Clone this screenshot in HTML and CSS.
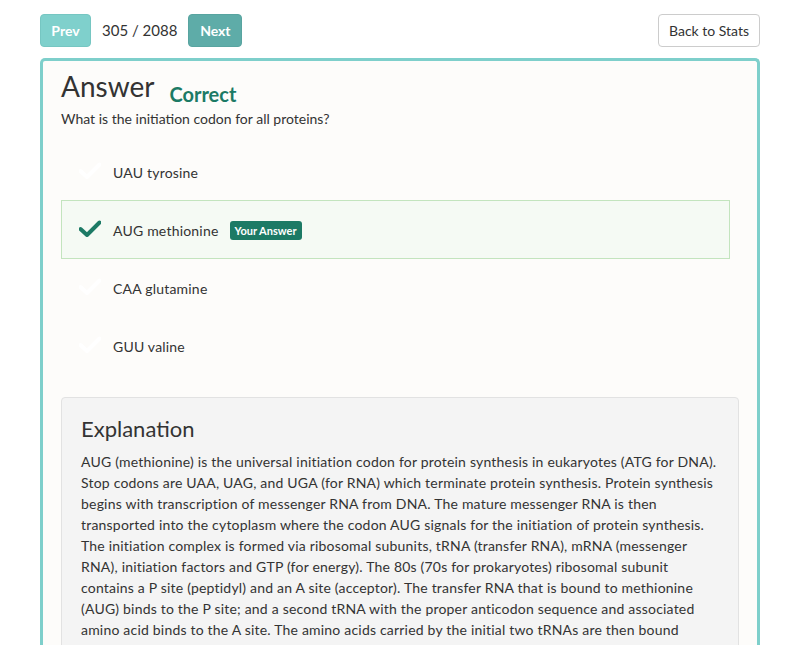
FILE: index.html
```html
<!DOCTYPE html>
<html>
<head>
<meta charset="utf-8">
<link rel="stylesheet" href="styles.css">
</head>
<body>
<div class="container">
  <div class="toolbar">
    <div class="nav">
      <button class="btn btn-prev">Prev</button>
      <span class="counter">305 / 2088</span>
      <button class="btn btn-next">Next</button>
    </div>
    <button class="btn btn-back">Back to Stats</button>
  </div>
  <div class="card">
    <div class="title-row">
      <h1 class="title">Answer</h1>
      <span class="status">Correct</span>
    </div>
    <p class="question">What is the initiation codon for all proteins?</p>
    <ul class="options">
      <li class="option">
        <svg class="check" viewBox="0 0 22 17"><path d="M1.5 9 L8 15 L20.5 2.5" /></svg>
        <span>UAU tyrosine</span>
      </li>
      <li class="option selected">
        <svg class="check" viewBox="0 0 22 17"><path d="M1.5 9 L8 15 L20.5 2.5" /></svg>
        <span>AUG methionine</span>
        <span class="badge">Your Answer</span>
      </li>
      <li class="option">
        <svg class="check" viewBox="0 0 22 17"><path d="M1.5 9 L8 15 L20.5 2.5" /></svg>
        <span>CAA glutamine</span>
      </li>
      <li class="option">
        <svg class="check" viewBox="0 0 22 17"><path d="M1.5 9 L8 15 L20.5 2.5" /></svg>
        <span>GUU valine</span>
      </li>
    </ul>
    <div class="explanation">
      <h2 class="exp-title">Explanation</h2>
      <p class="exp-text">AUG (methionine) is the universal initiation codon for protein synthesis in eukaryotes (ATG for DNA).<br>
Stop codons are UAA, UAG, and UGA (for RNA) which terminate protein synthesis. Protein synthesis<br>
begins with transcription of messenger RNA from DNA. The mature messenger RNA is then<br>
transported into the cytoplasm where the codon AUG signals for the initiation of protein synthesis.<br>
The initiation complex is formed via ribosomal subunits, tRNA (transfer RNA), mRNA (messenger<br>
RNA), initiation factors and GTP (for energy). The 80s (70s for prokaryotes) ribosomal subunit<br>
contains a P site (peptidyl) and an A site (acceptor). The transfer RNA that is bound to methionine<br>
(AUG) binds to the P site; and a second tRNA with the proper anticodon sequence and associated<br>
amino acid binds to the A site. The amino acids carried by the initial two tRNAs are then bound<br>
together via peptidyl transferase and the energy from GTP. The ribosome then moves along the</p>
    </div>
  </div>
</div>
</body>
</html>
```

FILE: styles.css
```css
* { box-sizing: border-box; }
html, body { margin: 0; padding: 0; background: #ffffff; }
body {
  font-family: Lato, "Open Sans", sans-serif;
  color: #333;
  overflow: hidden;
  height: 645px;
}
.container {
  width: 720px;
  margin: 0 auto;
  padding-top: 14px;
}
.toolbar {
  display: flex;
  justify-content: space-between;
  align-items: center;
}
.nav {
  display: flex;
  align-items: center;
  gap: 11px;
}
.btn {
  font-family: Lato, sans-serif;
  height: 33px;
  border-radius: 4px;
  font-size: 14px;
  padding: 0 12px;
  border: 1px solid transparent;
  cursor: pointer;
}
.btn-prev {
  background: #7fd0cc;
  border-color: #76c6c2;
  color: #fff;
  font-weight: 700;
  width: 51px;
  padding: 0;
}
.btn-next {
  background: #5eaca8;
  border-color: #58a4a0;
  color: #fff;
  font-weight: 700;
  width: 54px;
  padding: 0;
}
.counter {
  font-size: 15px;
  color: #333;
  margin-top: -2px;
}
.btn-back {
  background: #fff;
  border-color: #ccc;
  color: #333;
  width: 102px;
  padding: 0;
}
.card {
  margin-top: 11px;
  border: 3px solid #7ecfcb;
  border-bottom: none;
  border-radius: 5px 5px 0 0;
  background: #fdfcfa;
  padding: 8px 18px 0 18px;
  height: 600px;
}
.title-row {
  display: flex;
  align-items: baseline;
}
.title {
  margin: 0;
  font-size: 28px;
  font-weight: 400;
  line-height: 34px;
  color: #333;
}
.status {
  margin-left: 15px;
  font-size: 20px;
  font-weight: 700;
  color: #1c7a65;
  position: relative;
  top: 5px;
}
.question {
  margin: 6px 0 0 0;
  font-size: 14px;
  line-height: 20px;
}
.options {
  list-style: none;
  margin: 13px 0 0 0;
  padding: 0;
  width: 669px;
}
.option {
  display: flex;
  align-items: center;
  height: 59px;
  padding-left: 17px;
  padding-top: 2px;
  font-size: 14px;
  letter-spacing: 0.2px;
  border: 1px solid transparent;
  margin-bottom: -1px;
}
.option.selected {
  background: #f5faf4;
  border-color: #c3e4be;
}
.check {
  width: 22px;
  height: 17px;
  margin-right: 12px;
  margin-top: -4px;
  fill: none;
  stroke: #ffffff;
  stroke-width: 4;
  stroke-linecap: round;
  stroke-linejoin: round;
}
.selected .check { stroke: #1c7a65; }
.badge {
  display: inline-block;
  margin-left: 11px;
  background: #1c7a65;
  color: #fff;
  font-size: 11px;
  font-weight: 700;
  letter-spacing: 0;
  height: 19px;
  line-height: 19px;
  padding: 0 5px;
  border-radius: 3px;
}
.explanation {
  margin-top: 23px;
  width: 678px;
  background: #f4f4f4;
  border: 1px solid #e2e2e2;
  border-radius: 4px;
  padding: 17px 19px;
}
.exp-title {
  margin: 0 0 8px 0;
  font-size: 22px;
  font-weight: 400;
  line-height: 28px;
}
.exp-text {
  margin: 0;
  font-size: 14px;
  line-height: 21px;
  letter-spacing: 0.2px;
  white-space: nowrap;
}
```
